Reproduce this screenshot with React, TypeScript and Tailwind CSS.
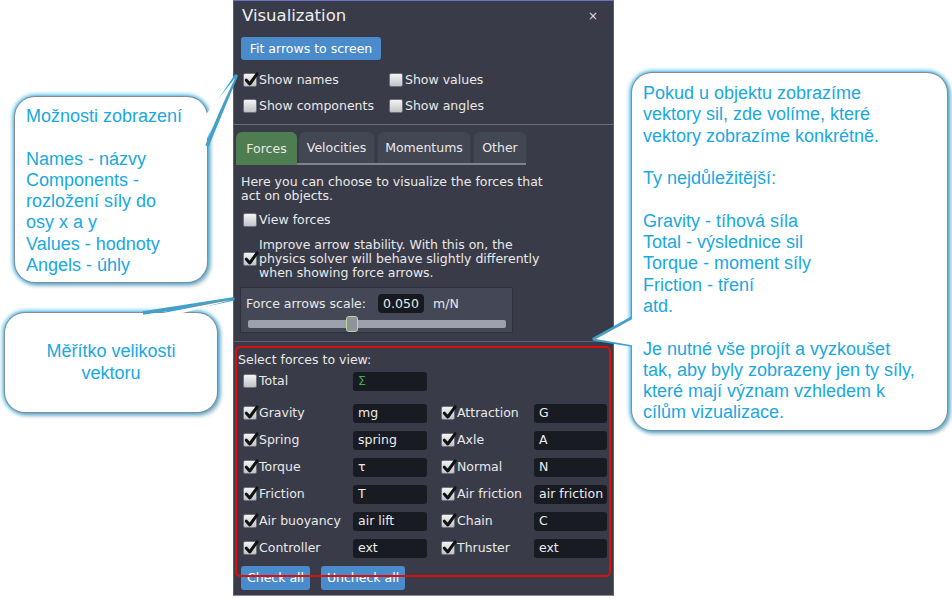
import React from "react";

type Force = { name: string; symbol: string };

const leftForces: Force[] = [
  { name: "Gravity", symbol: "mg" },
  { name: "Spring", symbol: "spring" },
  { name: "Torque", symbol: "τ" },
  { name: "Friction", symbol: "T" },
  { name: "Air buoyancy", symbol: "air lift" },
  { name: "Controller", symbol: "ext" },
];

const rightForces: Force[] = [
  { name: "Attraction", symbol: "G" },
  { name: "Axle", symbol: "A" },
  { name: "Normal", symbol: "N" },
  { name: "Air friction", symbol: "air friction" },
  { name: "Chain", symbol: "C" },
  { name: "Thruster", symbol: "ext" },
];

function Box({ checked }: { checked?: boolean }) {
  return (
    <span className="relative inline-block h-[14px] w-[14px] shrink-0 rounded-[2px] border border-[#6f727b] bg-linear-to-b from-[#f4f4f4] to-[#c2c3c8]">
      {checked ? (
        <svg viewBox="0 0 14 14" className="absolute -top-[2px] left-[0px] h-[15px] w-[15px]">
          <path
            d="M2.2 7.6 L5.4 11.2 L12.2 1.8"
            fill="none"
            stroke="#121212"
            strokeWidth="2.8"
            strokeLinecap="round"
            strokeLinejoin="round"
          />
        </svg>
      ) : null}
    </span>
  );
}

function Check({ label, checked }: { label: string; checked?: boolean }) {
  return (
    <div className="flex h-[20px] items-center gap-[2px]">
      <Box checked={checked} />
      <span>{label}</span>
    </div>
  );
}

function Field({ value, width, green }: { value: string; width: string; green?: boolean }) {
  return (
    <div
      className={`flex h-[19px] items-center rounded-[3px] bg-[#191b22] pl-[5px] ${width} ${
        green ? "text-[#3fae49]" : "text-[#ececec]"
      }`}
    >
      {value}
    </div>
  );
}

function Tab({ label, active, width }: { label: string; active?: boolean; width: string }) {
  return (
    <div
      className={`flex items-center justify-center rounded-t-[6px] ${width} ${
        active ? "relative -mb-[2px] h-[33px] bg-[#4e7d51]" : "h-[31px] bg-[#434653]"
      }`}
    >
      {label}
    </div>
  );
}

function Callout({
  className,
  children,
}: {
  className: string;
  children: React.ReactNode;
}) {
  return (
    <div
      className={`absolute rounded-[20px] bg-white font-['Liberation_Sans',Arial,sans-serif] text-[18px] leading-[21.3px] text-[#19a8e1] shadow-[0_0_0_1px_#868c92,0_0_4px_2px_#25a9e1,3px_3px_5px_rgba(0,0,0,0.3)] ${className}`}
    >
      {children}
    </div>
  );
}

export default function App() {
  return (
    <div className="relative h-[598px] w-[952px] overflow-hidden bg-white">
      <div className="relative ml-[233px] flex h-[596px] w-[381px] flex-col border-x border-t border-b border-x-[#5e616d] border-t-[#6a74c6] border-b-[#8d909a] bg-[#393c48] font-['DejaVu_Sans',sans-serif] text-[12.5px] leading-[14px] text-[#e9e9e9]">
        <div className="flex h-[30px] items-center justify-between pl-[8px] pr-[15px]">
          <span className="text-[16.5px] leading-[20px] text-[#eeeeee]">Visualization</span>
          <span className="text-[12px] text-[#dddddd]">×</span>
        </div>

        <div className="ml-[7px] mt-[6px] flex h-[23px] w-[140px] items-center justify-center rounded-[3px] bg-[#4a8ccb] text-white">
          Fit arrows to screen
        </div>

        <div className="ml-[9px] mt-[7px] grid grid-cols-[146px_1fr]">
          <div className="flex h-[26px] items-center">
            <Check label="Show names" checked />
          </div>
          <div className="flex h-[26px] items-center">
            <Check label="Show values" />
          </div>
          <div className="flex h-[26px] items-center">
            <Check label="Show components" />
          </div>
          <div className="flex h-[26px] items-center">
            <Check label="Show angles" />
          </div>
        </div>

        <div className="mt-[5px] h-px bg-[#6d707b]" />

        <div className="ml-[2px] mt-[7px] flex w-fit items-end border-b-2 border-[#80838f]">
          <Tab label="Forces" active width="w-[61px]" />
          <div className="ml-[2px]">
            <Tab label="Velocities" width="w-[75px]" />
          </div>
          <div className="ml-[4px]">
            <Tab label="Momentums" width="w-[92px]" />
          </div>
          <div className="ml-[4px]">
            <Tab label="Other" width="w-[52px]" />
          </div>
        </div>

        <p className="ml-[7px] mt-[10px] w-[320px]">
          Here you can choose to visualize the forces that act on objects.
        </p>

        <div className="ml-[9px] mt-[7px]">
          <Check label="View forces" />
        </div>

        <div className="ml-[9px] mt-[8px] flex items-center gap-[2px]">
          <Box checked />
          <span className="w-[290px]">
            Improve arrow stability. With this on, the physics solver will behave slightly
            differently when showing force arrows.
          </span>
        </div>

        <div className="ml-[6px] mt-[7px] flex h-[46px] w-[273px] flex-col border border-[#2f323c] bg-[#444856] pl-[5px] pt-[6px]">
          <div className="flex h-[19px] items-center">
            <span className="w-[132px]">Force arrows scale:</span>
            <span className="flex h-[19px] w-[46px] items-center justify-center rounded-[4px] bg-[#171920]">
              0.050
            </span>
            <span className="ml-[9px]">m/N</span>
          </div>
          <div className="relative ml-[2px] mt-[3px] flex h-[16px] w-[258px] items-center">
            <div className="h-[8px] w-full rounded-[2px] bg-[#9da1ab]" />
            <div className="absolute left-[98px] top-0 h-[16px] w-[12px] rounded-[3px] border border-[#b9dba0] bg-[#8f939c]" />
          </div>
        </div>

        <div className="mt-[8px] h-px bg-[#5f626d]" />

        <div className="flex flex-col pl-[4px]">
          <div className="mt-[11px]">Select forces to view:</div>
          <div className="ml-[5px] mt-[4px] flex h-[20px] items-center">
            <div className="w-[110px]">
              <Check label="Total" />
            </div>
            <Field value="Σ" width="w-[74px]" green />
          </div>

          <div className="ml-[5px] mt-[12px] flex flex-col gap-[7px]">
            {leftForces.map((left, i) => (
              <div key={left.name} className="flex h-[20px] items-center">
                <div className="w-[110px]">
                  <Check label={left.name} checked />
                </div>
                <Field value={left.symbol} width="w-[74px]" />
                <div className="ml-[14px] w-[93px]">
                  <Check label={rightForces[i].name} checked />
                </div>
                <Field value={rightForces[i].symbol} width="w-[73px]" />
              </div>
            ))}
          </div>

          <div className="ml-[3px] mt-[8px] flex gap-[11px]">
            <div className="flex h-[24px] w-[69px] items-center justify-center rounded-[3px] bg-[#4a8ccb] text-white">
              Check all
            </div>
            <div className="flex h-[24px] w-[84px] items-center justify-center rounded-[3px] bg-[#4a8ccb] text-white">
              Uncheck all
            </div>
          </div>
        </div>

        <div className="pointer-events-none absolute left-[1px] top-[345px] h-[231px] w-[376px] rounded-[5px] border-2 border-[#e00d0d]" />
      </div>

      <Callout className="left-[15px] top-[97px] h-[185px] w-[192px] whitespace-pre-line pl-[11px] pt-[9px]">
        {"Možnosti zobrazení\n\nNames - názvy\nComponents -\nrozložení síly do\nosy x a y\nValues - hodnoty\nAngels - úhly"}
      </Callout>

      <Callout className="left-[5px] top-[313px] flex h-[99px] w-[212px] items-center justify-center text-center">
        <span>
          Měřítko velikosti
          <br />
          vektoru
        </span>
      </Callout>

      <Callout className="left-[632px] top-[73px] h-[357px] w-[315px] whitespace-pre-line pl-[11px] pt-[10px]">
        {"Pokud u objektu zobrazíme\nvektory sil, zde volíme, které\nvektory zobrazíme konkrétně.\n\nTy nejdůležitější:\n\nGravity - tíhová síla\nTotal - výslednice sil\nTorque - moment síly\nFriction - tření\natd.\n\nJe nutné vše projít a vyzkoušet\ntak, aby byly zobrazeny jen ty síly,\nkteré mají význam vzhledem k\ncílům vizualizace."}
      </Callout>

      <svg className="pointer-events-none absolute left-0 top-0" width="952" height="598">
        <polyline points="207,119 236,76 207,146" fill="none" stroke="#25a9e1" strokeWidth="3.5" strokeLinejoin="round" />
        <polyline points="207,119 236,76 207,146" fill="none" stroke="#868c92" strokeWidth="1" />
        <polygon points="203,118 235,78 203,147" fill="#ffffff" />

        <polyline points="143,313 233,299 167,313" fill="none" stroke="#25a9e1" strokeWidth="3.5" strokeLinejoin="round" />
        <polyline points="143,313 233,299 167,313" fill="none" stroke="#868c92" strokeWidth="1" />
        <polygon points="142,317 231,300 168,317" fill="#ffffff" />

        <polyline points="632,318 594,339 632,345" fill="none" stroke="#25a9e1" strokeWidth="3.5" strokeLinejoin="round" />
        <polyline points="632,318 594,339 632,345" fill="none" stroke="#868c92" strokeWidth="1" />
        <polygon points="636,317 596,339 636,346" fill="#ffffff" />
      </svg>
    </div>
  );
}
